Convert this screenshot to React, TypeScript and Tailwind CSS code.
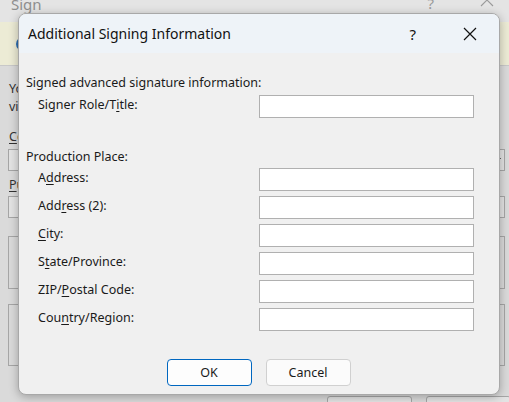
import React from "react";

const font = { fontFamily: '"Noto Sans", "Segoe UI", sans-serif' };

function Field({ label }: { label: React.ReactNode }) {
  return (
    <div className="flex h-[23px] mb-[5px] items-start">
      <div className="w-[240px] pl-[19px] pt-[2px] text-[12.5px] leading-[16px] text-[#1a1a1a] whitespace-nowrap">
        {label}
      </div>
      <div className="w-[215px] h-[23px] bg-white border border-[#b0b0b0]" />
    </div>
  );
}

function Mn({ children }: { children: React.ReactNode }) {
  return <span className="underline underline-offset-[2px] decoration-[1px]">{children}</span>;
}

export default function App() {
  return (
    <div
      className="relative w-[509px] h-[402px] overflow-hidden bg-[#dadada] text-[#1a1a1a]"
      style={font}
    >
      {/* Parent "Sign" window (inactive) */}
      <div className="flex flex-col">
        <div className="h-[22px] shrink-0 bg-[#e4e4e4] flex items-start overflow-hidden">
          <div className="pl-[11px] -mt-[6px] text-[15px] leading-[20px] text-[#8e8e8e]">Sign</div>
          <div className="flex-1" />
          <div className="-mt-[7px] text-[15px] leading-[20px] text-[#9a9a9a] mr-[46px]">?</div>
          <svg width="14" height="14" viewBox="0 0 14 14" className="-mt-[7px] mr-[15px]">
            <path d="M1 1 L13 13 M13 1 L1 13" stroke="#9a9a9a" strokeWidth="1.1" />
          </svg>
        </div>
        <div className="h-[44px] shrink-0 bg-[#ecebd5] border-b border-[#c8c8c8] flex items-center pl-[16px]">
          <div className="w-[14px] h-[14px] rounded-full border-2 border-[#2b6cb0]" />
        </div>
        <div className="flex flex-col pl-[8px] pr-[4px]">
          <div className="mt-[14px] pl-[1px] text-[12.5px] leading-[18px] text-[#333] whitespace-nowrap">
            You are about to add a digital signature to this document. This signature will not be
          </div>
          <div className="pl-[1px] text-[12.5px] leading-[18px] text-[#333] whitespace-nowrap">
            visible within the content of this document.
          </div>
          <div className="mt-[12px] pl-[1px] text-[12.5px] leading-[18px] text-[#333]">
            <Mn>C</Mn>ommitment Type:
          </div>
          <div className="mt-[3px] h-[22px] shrink-0 bg-[#e3e3e3] border border-[#a6a6a6] flex items-center justify-end pr-[2px]">
            <svg width="8" height="6" viewBox="0 0 8 6">
              <path d="M1 1 L4 4 L7 1" stroke="#666" fill="none" strokeWidth="1" />
            </svg>
          </div>
          <div className="mt-[5px] pl-[1px] text-[12.5px] leading-[18px] text-[#333]">
            <Mn>P</Mn>urpose for signing this document:
          </div>
          <div className="mt-[2px] h-[22px] shrink-0 bg-[#e3e3e3] border border-[#a6a6a6]" />
          <div className="mt-[18px] h-[53px] shrink-0 border border-[#a6a6a6]" />
          <div className="mt-[15px] h-[62px] shrink-0 border border-[#a6a6a6]" />
          <div className="mt-[30px] flex justify-end gap-[14px] shrink-0">
            <div className="w-[85px] h-[26px] bg-[#e3e3e3] border border-[#a6a6a6] rounded-[3px] text-center text-[12.5px] leading-[24px]">
              Sign
            </div>
            <div className="w-[85px] h-[26px] bg-[#e3e3e3] border border-[#a6a6a6] rounded-[3px] text-center text-[12.5px] leading-[24px] -mr-[6px]">
              Cancel
            </div>
          </div>
        </div>
      </div>

      {/* Modal dialog */}
      <div className="absolute left-[18px] top-[13px] w-[482px] h-[382px] rounded-[8px] bg-[#f0f0f0] border border-[#a8a8a8] shadow-[0_2px_10px_rgba(0,0,0,0.28)] overflow-hidden flex flex-col">
        <div className="h-[39px] bg-[#eef3f8] flex items-center shrink-0">
          <div className="pl-[9px] text-[14px] leading-[20px] text-[#111]">Additional Signing Information</div>
          <div className="flex-1" />
          <div className="text-[15px] leading-[20px] text-[#111] mr-[47px]">?</div>
          <svg width="14" height="14" viewBox="0 0 14 14" className="mr-[22px]">
            <path d="M1 1 L13 13 M13 1 L1 13" stroke="#111" strokeWidth="1.2" />
          </svg>
        </div>
        <div className="flex flex-col pt-[22px] pl-[7px]">
          <div className="text-[12.5px] leading-[16px] whitespace-nowrap">Signed advanced signature information:</div>
          <div className="mt-[4px] -ml-[7px]">
            <Field label={<>Signer Role/T<Mn>i</Mn>tle:</>} />
          </div>
          <div className="mt-[26px] text-[12.5px] leading-[16px]">Production Place:</div>
          <div className="mt-[3px] -ml-[7px]">
            <Field label={<>A<Mn>d</Mn>dress:</>} />
            <Field label={<>Add<Mn>r</Mn>ess (2):</>} />
            <Field label={<><Mn>C</Mn>ity:</>} />
            <Field label={<>S<Mn>t</Mn>ate/Province:</>} />
            <Field label={<>ZIP/<Mn>P</Mn>ostal Code:</>} />
            <Field label={<>Cou<Mn>n</Mn>try/Region:</>} />
          </div>
        </div>
        <div className="mt-[23px] flex justify-center gap-[14px] pr-[1px]">
          <div className="w-[85px] h-[27px] rounded-[4px] bg-[#fdfdfd] border border-[#0067c0] text-[12.5px] leading-[25px] text-center">
            OK
          </div>
          <div className="w-[85px] h-[27px] rounded-[4px] bg-[#fbfbfb] border border-[#d0d0d0] text-[12.5px] leading-[25px] text-center">
            Cancel
          </div>
        </div>
      </div>
    </div>
  );
}
